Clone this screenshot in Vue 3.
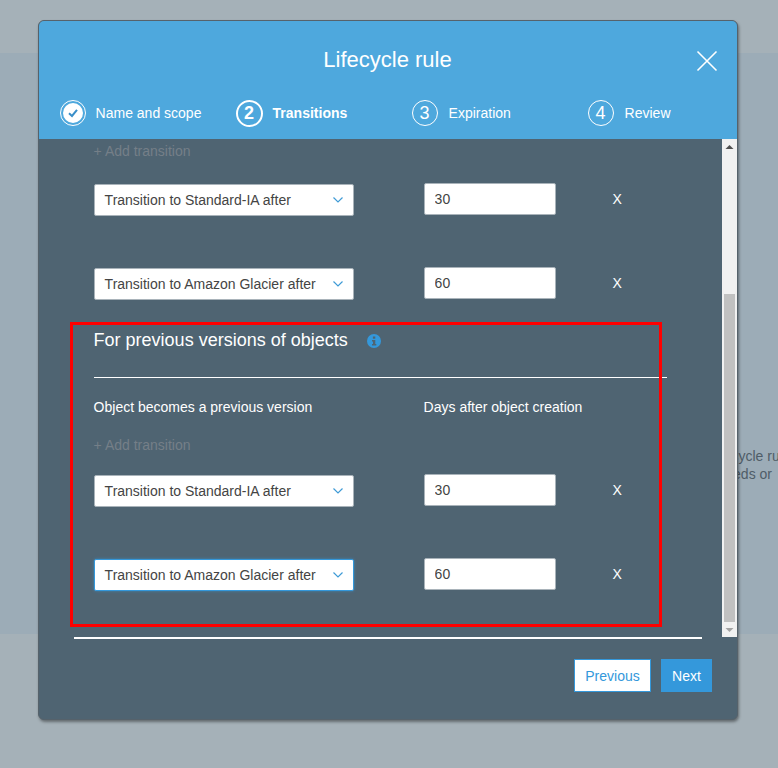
<script setup>
const steps = [
  { label: 'Name and scope', done: true },
  { label: 'Transitions', num: 2, active: true },
  { label: 'Expiration', num: 3 },
  { label: 'Review', num: 4 },
]
const firstRows = [
  { text: 'Transition to Standard-IA after', days: '30' },
  { text: 'Transition to Amazon Glacier after', days: '60' },
]
const secondRows = [
  { text: 'Transition to Standard-IA after', days: '30' },
  { text: 'Transition to Amazon Glacier after', days: '60', focus: true },
]
</script>

<template>
  <div class="page">
    <div class="band top"></div>
    <div class="band middle">
      <p class="behind">Create a lifecycle rule<br />when our needs or</p>
    </div>
    <div class="band bottom"></div>

    <div class="modal">
      <header class="head">
        <h1 class="title">Lifecycle rule</h1>
        <svg class="close" width="22" height="22" viewBox="0 0 22 22">
          <path d="M1.5 1.5 20.5 20.5M20.5 1.5 1.5 20.5" stroke="#fff" stroke-width="1.6" fill="none" />
        </svg>
        <ol class="steps">
          <li v-for="s in steps" :key="s.label" class="step" :class="{ active: s.active, plain: !s.active && !s.done }">
            <span v-if="s.done" class="circle done">
              <svg width="20" height="20" viewBox="0 0 20 20">
                <circle cx="10" cy="10" r="10" fill="#fff" />
                <path d="M6 10.2 9 13 14 6.8" stroke="#3a8fc9" stroke-width="2" fill="none" />
              </svg>
            </span>
            <span v-else class="circle">{{ s.num }}</span>
            <span class="step-label">{{ s.label }}</span>
          </li>
        </ol>
      </header>

      <div class="body">
        <div class="scroll-view">
          <div class="content">
            <div class="add first">+ Add transition</div>
            <div v-for="r in firstRows" :key="r.text" class="row">
              <div class="select">
                <span>{{ r.text }}</span>
                <svg width="10" height="6" viewBox="0 0 10 6"><path d="M.5 .5 5 5 9.5 .5" stroke="#3f9bd6" stroke-width="1.2" fill="none" /></svg>
              </div>
              <input class="days" :value="r.days" />
              <span class="remove">X</span>
            </div>

            <div class="section-head">
              <h2>For previous versions of objects</h2>
              <svg class="info" width="14" height="14" viewBox="0 0 14 14">
                <circle cx="7" cy="7" r="7" fill="#3498db" />
                <rect x="5.9" y="2.5" width="2.4" height="2.2" fill="#4f6472" />
                <path d="M5 6h3.3v4h1v1.5H5V10h1V7.4H5z" fill="#4f6472" />
              </svg>
            </div>
            <div class="labels">
              <span>Object becomes a previous version</span>
              <span>Days after object creation</span>
            </div>
            <div class="add second">+ Add transition</div>
            <div v-for="r in secondRows" :key="r.text" class="row">
              <div class="select" :class="{ focus: r.focus }">
                <span>{{ r.text }}</span>
                <svg width="10" height="6" viewBox="0 0 10 6"><path d="M.5 .5 5 5 9.5 .5" stroke="#3f9bd6" stroke-width="1.2" fill="none" /></svg>
              </div>
              <input class="days" :value="r.days" />
              <span class="remove">X</span>
            </div>
          </div>
          <div class="scrollbar">
            <svg class="arrow" width="15" height="15" viewBox="0 0 15 15"><path d="M3.5 10 7.5 6 11.5 10z" fill="#505050" /></svg>
            <div class="track"><div class="thumb"></div></div>
            <svg class="arrow" width="15" height="15" viewBox="0 0 15 15"><path d="M3.5 6 7.5 10 11.5 6z" fill="#a3a3a3" /></svg>
          </div>
        </div>
        <div class="rule"></div>
        <footer class="foot">
          <button class="btn ghost">Previous</button>
          <button class="btn solid">Next</button>
        </footer>
      </div>
    </div>

    <div class="highlight"></div>
  </div>
</template>

<style>
html, body { margin: 0; padding: 0; }
</style>

<style scoped>
.page {
  position: relative;
  width: 778px;
  height: 768px;
  overflow: hidden;
  font-family: "Liberation Sans", Arial, sans-serif;
  font-size: 14px;
  display: flex;
  flex-direction: column;
}
.band.top { height: 53px; background: #a5b1b8; }
.band.middle { height: 581px; background: #9cacb7; position: relative; }
.band.bottom { flex: 1; background: #a5b1b8; }
.behind {
  position: absolute;
  margin: 0;
  left: 656px;
  top: 394px;
  width: 240px;
  line-height: 18px;
  color: #4f5d68;
  white-space: nowrap;
}
.modal {
  position: absolute;
  left: 38px;
  top: 20px;
  width: 698px;
  height: 698px;
  border: 1px solid #56626b;
  border-radius: 6px;
  box-shadow: 1px 2px 3px rgba(0, 0, 0, 0.4);
  display: flex;
  flex-direction: column;
  overflow: hidden;
  background: #4f6472;
}
.head {
  position: relative;
  height: 118px;
  flex: none;
  background: #4ea8dd;
  color: #fff;
  box-sizing: border-box;
}
.title {
  margin: 0;
  padding: 26px 1px 0 0;
  text-align: center;
  font-size: 22px;
  line-height: 26px;
  font-weight: 400;
}
.close { position: absolute; right: 19px; top: 29px; }
.steps {
  list-style: none;
  margin: 0;
  padding: 0 0 0 20.6px;
  position: absolute;
  left: 0;
  top: 79px;
  display: grid;
  grid-template-columns: 176px 176px 176px 150px;
}
.step { display: flex; align-items: center; gap: 10px; height: 26px; }
.step.plain { gap: 11px; }
.circle {
  width: 24px;
  height: 24px;
  border: 1px solid #fff;
  border-radius: 50%;
  display: flex;
  align-items: center;
  justify-content: center;
  font-size: 18px;
  flex: none;
}
.step.active .circle { border-width: 2px; font-weight: 700; width: 23px; height: 23px; }
.step.active .step-label { font-weight: 700; }
.scroll-view { display: flex; height: 498px; overflow: hidden; flex: none; }
.body { flex: 1; display: flex; flex-direction: column; }
.content { flex: 1; padding-left: 54.6px; color: #fff; }
.add { color: #757f88; line-height: 16px; }
.add.first { margin-top: 4px; margin-bottom: 1px; }
.add.second { margin-top: 22px; margin-bottom: -2px; }
.row {
  display: grid;
  grid-template-columns: 260px 132px auto;
  column-gap: 70px;
  height: 84px;
  padding-top: 24px;
  box-sizing: border-box;
}
.select {
  height: 32px;
  box-sizing: border-box;
  background: #fff;
  border: 1px solid #a9b3ba;
  border-radius: 2px;
  color: #444;
  display: flex;
  align-items: center;
  justify-content: space-between;
  padding: 0 10px;
}
.select.focus { border-color: #3498db; box-shadow: 0 0 3px rgba(52, 152, 219, 0.7); }
.days {
  margin-top: -1px;
  height: 32px;
  width: 132px;
  box-sizing: border-box;
  background: #fff;
  border: 1px solid #a9b3ba;
  border-radius: 2px;
  color: #444;
  font: inherit;
  padding: 0 10px;
}
.remove { margin-left: -13px; line-height: 31px; }
.section-head {
  display: flex;
  align-items: center;
  width: 573px;
  height: 57px;
  margin-top: -7px;
  padding-bottom: 19px;
  box-sizing: border-box;
  border-bottom: 1px solid #fff;
}
.section-head h2 { margin: 0; font-size: 18px; font-weight: 400; line-height: 22px; }
.info { margin-left: 19px; margin-top: 2px; }
.labels {
  display: grid;
  grid-template-columns: 330px auto;
  margin-top: 21px;
  line-height: 16px;
}
.scrollbar {
  width: 15px;
  flex: none;
  background: #f1f1f1;
  display: flex;
  flex-direction: column;
}
.arrow { flex: none; display: block; }
.track { flex: 1; display: flex; flex-direction: column; justify-content: flex-end; padding: 0 2px; }
.thumb { height: 328px; background: #c1c1c1; }
.rule {
  margin: 0 35px 0 35px;
  height: 2px;
  background: #fff;
  flex: none;
}
.foot {
  display: flex;
  justify-content: flex-end;
  gap: 10px;
  padding: 20px 25px 0 0;
}
.btn {
  height: 33px;
  font: inherit;
  box-sizing: border-box;
  border-radius: 0;
  padding: 0;
  cursor: pointer;
}
.btn.ghost { width: 77px; background: #fff; color: #3498db; border: 1px solid #3498db; }
.btn.solid { width: 51px; background: #3498db; color: #fff; border: 1px solid #3498db; }
.highlight {
  position: absolute;
  left: 70px;
  top: 322px;
  width: 586px;
  height: 299px;
  border: 3px solid #fe0000;
  pointer-events: none;
}
</style>
